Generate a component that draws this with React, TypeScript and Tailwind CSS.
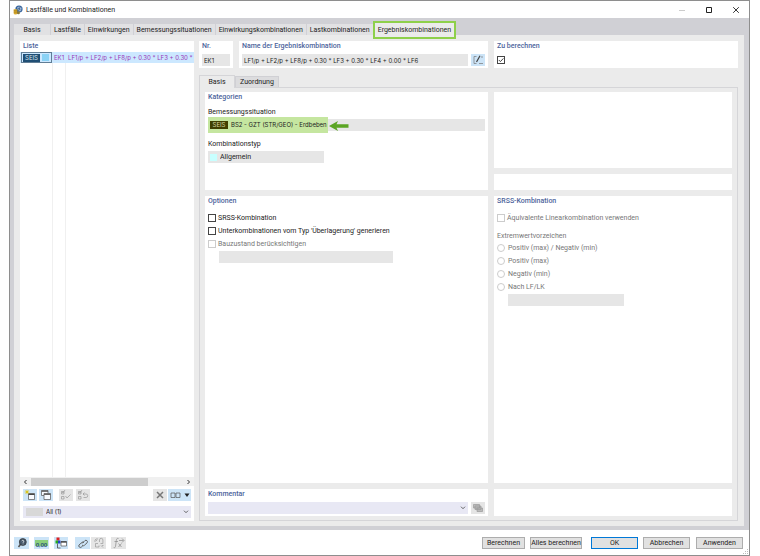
import React, { ReactNode } from "react";

const tabs = [
  "Lastfälle",
  "Einwirkungen",
  "Bemessungssituationen",
  "Einwirkungskombinationen",
  "Lastkombinationen",
];

const valueText = "font-['Inter','Noto_Sans',sans-serif] text-[6px] ";

function Panel({ title, className = "", children }: { title?: string; className?: string; children?: ReactNode }) {
  return (
    <section className={"bg-white px-[3px] " + className}>
      {title && <h2 className="h-[11px] leading-[11px] font-medium text-[#4d649b]">{title}</h2>}
      {children}
    </section>
  );
}

function Check({ id, label, checked = false, disabled = false }: { id: string; label: string; checked?: boolean; disabled?: boolean }) {
  return (
    <div className="flex h-[13px] items-center gap-[2px]">
      <span className="relative flex size-2">
        <input
          id={id}
          type="checkbox"
          defaultChecked={checked}
          disabled={disabled}
          aria-label={label || "Zu berechnen"}
          className="size-2 appearance-none border border-[#444] bg-white disabled:border-[#ccc]"
        />
        {checked && (
          <svg viewBox="0 0 8 8" className="pointer-events-none absolute inset-0 size-2" fill="none" stroke="#444">
            <path d="M1.8 4l1.6 1.6L6.4 2.4" />
          </svg>
        )}
      </span>
      {label && (
        <label htmlFor={id} className={disabled ? "text-[#777]" : ""}>
          {label}
        </label>
      )}
    </div>
  );
}

function Radio({ id, label }: { id: string; label: string }) {
  return (
    <div className="flex h-[13px] items-center gap-[3px]">
      <input id={id} type="radio" name="sign" disabled className="size-2 appearance-none rounded-full border border-[#ccc] bg-white" />
      <label htmlFor={id}>{label}</label>
    </div>
  );
}

function IconButton({ label, muted = false, className = "w-[15px]", children }: { label: string; muted?: boolean; className?: string; children: ReactNode }) {
  return (
    <button
      type="button"
      aria-label={label}
      className={"flex h-3 shrink-0 items-center justify-center " + (muted ? "bg-[#e5e5e5] " : "bg-[#cce4f7] ") + className}
    >
      {children}
    </button>
  );
}

function Icon({ children, wide = false }: { children: ReactNode; wide?: boolean }) {
  return (
    <svg viewBox={wide ? "0 0 20 12" : "0 0 12 12"} className={wide ? "h-3 w-5" : "size-3"} fill="none" stroke="#555" strokeWidth="0.7">
      {children}
    </svg>
  );
}

function Chevron() {
  return (
    <svg viewBox="0 0 6 4" className="pointer-events-none absolute top-1 right-[2px] h-1 w-[6px]" fill="none" stroke="#555" strokeWidth="0.9">
      <path d="M1 0.7l2 2 2-2" />
    </svg>
  );
}

function TitleBar() {
  return (
    <header className="flex h-[17px] shrink-0 items-center bg-white pl-[3px]">
      <svg viewBox="0 0 10 10" className="size-[10px]">
        <circle cx="6" cy="4" r="3.6" fill="#35629b" />
        <path d="M4 2.5l2-1 2.6 1.3L8 6 5.5 6.5z" fill="#9fb9d8" />
        <path d="M5 3l2.500 1.800M7 2L5.500 6" stroke="#23456f" strokeWidth="0.6" />
        <path d="M0.700 4.200h3.600v4.300a1.800 0.900 0 0 1-3.600 0z" fill="#d6a82e" />
        <path d="M4 6.500h2.800v2a1.400 0.800 0 0 1-2.800 0z" fill="#8a7a3c" />
        <path d="M0.700 5.700h3.600M0.700 7.200h3.600" stroke="#8b6710" strokeWidth="0.4" />
      </svg>
      <h1 className="ml-[3px] flex-1 leading-[10px]">Lastfälle und Kombinationen</h1>
      <div className="flex items-center">
        <button type="button" aria-label="Minimieren" className="flex w-[27px] justify-center">
          <svg viewBox="0 0 8 8" className="size-2" stroke="#ccc"><path d="M1 4.500h6" /></svg>
        </button>
        <button type="button" aria-label="Maximieren" className="flex w-[27px] justify-center">
          <svg viewBox="0 0 8 8" className="size-2" fill="none" stroke="#222"><path d="M1.500 1.500h5v5h-5z" /></svg>
        </button>
        <button type="button" aria-label="Schließen" className="flex w-[27px] justify-center">
          <svg viewBox="0 0 8 8" className="size-2" stroke="#222" strokeWidth="0.9"><path d="M1.200 1.200l5.600 5.600M6.800 1.200l-5.600 5.600" /></svg>
        </button>
      </div>
    </header>
  );
}

function ListPanel() {
  return (
    <section className="flex w-[174px] shrink-0 flex-col bg-white">
      <h2 className="h-[11px] pl-[3px] leading-[11px] font-medium text-[#4d649b]">Liste</h2>
      <div className="flex min-h-0 flex-1 flex-col">
        <div className={valueText + "flex h-[11px] items-center bg-[#cce8ff] pl-px text-[#9a35b5]"}>
          <div className="flex h-[11px] w-[31px] shrink-0 items-center gap-[2px] border border-[#607d95] pl-px">
            <span className="h-2 w-[17px] bg-[#1f4e74] text-center leading-[8px] text-[#d7e6f2]">SEIS</span>
            <span className="size-[7px] bg-[#8ad2f5]" />
          </div>
          <span className="w-4 shrink-0 pl-[2px]">EK1</span>
          <span className="whitespace-nowrap">LF1/p + LF2/p + LF8/p + 0.30 * LF3 + 0.30 *</span>
        </div>
        <div className="flex flex-1">
          <div className="w-[33px] border-r border-[#f0f0f0]" />
          <div className="w-[13px] border-r border-[#f0f0f0]" />
        </div>
      </div>
      <div className="flex h-[9px] items-center bg-[#f0f0f0] px-[3px]">
        <svg viewBox="0 0 5 6" className="h-[6px] w-[5px]" fill="none" stroke="#333"><path d="M3.500 1l-2 2 2 2" /></svg>
        <div className="ml-[3px] h-2 w-[117px] bg-[#cdcdcd]" />
        <svg viewBox="0 0 5 6" className="ml-auto h-[6px] w-[5px]" fill="none" stroke="#333"><path d="M1.500 1l2 2-2 2" /></svg>
      </div>
      <div className="mt-[3px] flex px-[3px]">
        <IconButton label="Neu" className="w-[14px]">
          <Icon>
            <path d="M4.500 4.500h6v6h-6z" fill="#f8fbff" />
            <path d="M4.500 5.300h6" stroke="#333" strokeWidth="1.200" />
            <path d="M3 0.800v4.400M0.800 3h4.400M1.500 1.500l3 3M4.500 1.500l-3 3" stroke="#dcc000" />
          </Icon>
        </IconButton>
        <IconButton label="Kopieren" className="ml-[2px] w-[14px]">
          <Icon>
            <path d="M1.500 1.500H8V6.500H1.500z" fill="#f8fbff" />
            <path d="M1.500 2.200H8" strokeWidth="1.200" />
            <path d="M4 4.500h6.500v6H4z" fill="#f8fbff" />
            <path d="M4 5.300h6.500" strokeWidth="1.200" />
          </Icon>
        </IconButton>
        <IconButton label="Alle auswählen" muted className="ml-[6px] w-[14px]">
          <Icon><path stroke="#999" d="M1.500 2.500h2.500v2.500H1.500zM1.500 7.500h2.500v2.500H1.500zM2 2.800l1 1.200 2-3M5.500 7l1.500 2 3.500-3.500" /></Icon>
        </IconButton>
        <IconButton label="Auswahl umkehren" muted className="ml-[3px] w-[14px]">
          <Icon><path stroke="#999" d="M1.500 2.500h2.500v2.500H1.500zM1.500 7.500h2.500v2.500H1.500zM2 2.800l1 1.200 2-3M6 5h3a1.700 1.700 0 0 1 0 3.500H6.500M7.500 3.500L6 5 7.500 6.500" /></Icon>
        </IconButton>
        <IconButton label="Löschen" muted className="ml-auto w-[14px]">
          <Icon><path stroke="#777" strokeWidth="1.500" d="M3 3l6 6M9 3L3 9" /></Icon>
        </IconButton>
        <IconButton label="Ansicht" className="ml-px w-[23px]">
          <Icon wide><path d="M1 4h4v4.500H1zM6 4h4v4.500H6z" stroke="#555" /><path d="M14.500 4.500h5L17 8z" fill="#222" stroke="none" /></Icon>
        </IconButton>
      </div>
      <div className="relative mx-[3px] mt-[5px] mb-[3px] flex h-3 items-center bg-[#e8e8f4] pl-[3px]">
        <span className="h-2 w-[17px] bg-[#d8d8d8]" />
        <select aria-label="Filter" defaultValue="all" className={valueText + "ml-[3px] flex-1 appearance-none bg-transparent outline-none"}>
          <option value="all">All (1)</option>
        </select>
        <Chevron />
      </div>
    </section>
  );
}

function HeaderRow() {
  return (
    <div className="flex h-[27px] gap-[6px]">
      <Panel title="Nr." className="w-[34px] shrink-0">
        <input aria-label="Nr." readOnly value="EK1" className={valueText + "mt-[2px] block h-3 w-full bg-[#e6e6e6] px-[2px]"} />
      </Panel>
      <Panel title="Name der Ergebniskombination" className="w-[249px] shrink-0">
        <div className="mt-[2px] flex gap-[3px]">
          <input
            aria-label="Name der Ergebniskombination"
            readOnly
            value="LF1/p + LF2/p + LF8/p + 0.30 * LF3 + 0.30 * LF4 + 0.00 * LF6"
            className={valueText + "h-3 min-w-0 flex-1 bg-[#e6e6e6] px-[2px]"}
          />
          <IconButton label="Name bearbeiten" className="w-[14px]">
            <Icon>
              <path d="M4.500 2.500H2v7h2.500M7 9.500h4M9 3h2" stroke="#777" />
              <path d="M4.500 8L8 1.800" stroke="#444" strokeWidth="1.200" />
            </Icon>
          </IconButton>
        </div>
      </Panel>
      <Panel title="Zu berechnen" className="flex-1">
        <div className="mt-px">
          <Check id="calc" label="" checked />
        </div>
      </Panel>
    </div>
  );
}

function BasisPage() {
  return (
    <div className="flex flex-1 gap-[6px] border border-[#d5d5d8] px-[5px] pt-1 pb-1">
      <div className="flex w-[283px] shrink-0 flex-col gap-[6px]">
        <Panel title="Kategorien" className="h-[98px]">
          <div className="mt-1 leading-[11px]">Bemessungssituation</div>
          <div className="relative mt-px h-3 bg-[#e6e6e6]">
            <div className={valueText + "absolute -top-[2px] left-0 flex h-4 w-[120px] items-center bg-[#c5e6a0] pl-[2px]"}>
              <span className="h-2 w-[18px] bg-[#404000] text-center leading-2 text-[#d4d4a0]">SEIS</span>
              <input
                aria-label="Bemessungssituation"
                readOnly
                value="BS2 - GZT (STR/GEO) - Erdbeben"
                className="ml-[3px] min-w-0 flex-1 bg-transparent"
              />
            </div>
            <svg viewBox="0 0 20 10" className="absolute top-[2px] left-[121px] h-[10px] w-5">
              <path d="M0 5L9 0 7.500 3.200H19.500V6.800H7.500L9 10z" fill="#5ba524" />
            </svg>
          </div>
          <div className="mt-[8px] leading-[11px]">Kombinationstyp</div>
          <div className="mt-px flex h-3 w-[116px] items-center bg-[#e6e6e6] pl-[2px]">
            <span className="size-[7px] bg-[#c8ffff]" />
            <input aria-label="Kombinationstyp" readOnly value="Allgemein" className="ml-[3px] min-w-0 flex-1 bg-transparent" />
          </div>
        </Panel>
        <Panel title="Optionen" className="flex-1">
          <div className="mt-1">
            <Check id="srss" label="SRSS-Kombination" />
            <Check id="sub" label="Unterkombinationen vom Typ 'Überlagerung' generieren" />
            <Check id="stage" label="Bauzustand berücksichtigen" disabled />
            <input aria-label="Bauzustand" disabled className="mt-px ml-[11px] block h-3 w-[174px] bg-[#e6e6e6]" />
          </div>
        </Panel>
        <Panel title="Kommentar" className="h-[27px]">
          <div className="mt-[2px] flex gap-[3px]">
            <div className="relative flex flex-1">
              <select aria-label="Kommentar" className="h-3 w-full appearance-none bg-[#e8e8f4]">
                <option value=""></option>
              </select>
              <Chevron />
            </div>
            <IconButton label="Kommentare" muted className="w-[14px]">
              <Icon><path d="M1.500 2.500h6v3.500h-6zM3 4h6v3.500H3zM5 6h5.500v3.500H5z" fill="#bbb" stroke="#999" /></Icon>
            </IconButton>
          </div>
        </Panel>
      </div>
      <div className="flex flex-1 flex-col gap-[6px]">
        <Panel className="h-[76px]" />
        <Panel className="h-4" />
        <Panel title="SRSS-Kombination" className="flex-1 text-[#777]">
          <div className="mt-1">
            <Check id="linear" label="Äquivalente Linearkombination verwenden" disabled />
          </div>
          <div className="mt-[7px] leading-[10px]">Extremwertvorzeichen</div>
          <Radio id="posneg" label="Positiv (max) / Negativ (min)" />
          <Radio id="pos" label="Positiv (max)" />
          <Radio id="neg" label="Negativ (min)" />
          <Radio id="lflk" label="Nach LF/LK" />
          <input aria-label="LF/LK" disabled className="mt-px ml-[11px] block h-3 w-[116px] bg-[#e6e6e6]" />
        </Panel>
        <Panel className="h-[27px]" />
      </div>
    </div>
  );
}

function Footer() {
  const button = "h-3 border bg-[#e1e1e1] text-center leading-[10px] whitespace-nowrap ";
  return (
    <footer className="relative flex h-[25px] shrink-0 items-center bg-white pr-[6px] pl-1">
      <IconButton label="Hilfe">
        <Icon>
          <path d="M4.800 7L2.500 10" strokeWidth="1.600" />
          <circle cx="6.800" cy="5" r="3.500" fill="#46586a" stroke="#333" />
          <path d="M5.800 4.200a1 1 0 1 1 1.300 1.100v0.700M7.100 6.600v0.700" stroke="#fff" />
        </Icon>
      </IconButton>
      <IconButton label="Einheiten" className="ml-[5px] w-[15px]">
        <span className="h-[6px] w-[13px] bg-[#8ccf7c] text-center text-[6px] leading-[9px] font-medium text-[#234a78]">0,00</span>
      </IconButton>
      <IconButton label="Darstellung" className="ml-[5px] w-[14px]">
        <Icon>
          <path d="M1.500 0.500h3v3h-3z" fill="#d22" stroke="none" />
          <path d="M0.500 3.500H3v3H0.500z" fill="#2a2" stroke="none" />
          <path d="M3 3.500h2.500v3H3z" fill="#24c" stroke="none" />
          <path d="M2.500 6.500v4.500h3" stroke="#333" />
          <path d="M6 4.500h5.500v4.500H6z" fill="#fff" />
          <path d="M6 5h5.500" stroke="#333" strokeWidth="1.200" />
        </Icon>
      </IconButton>
      <IconButton label="Verknüpfen" className="ml-[7px] w-[15px]">
        <Icon>
          <path strokeWidth="0.900" d="M5 6.500l3-3a1.600 1.600 0 0 1 2.200 2.200L7.500 8.200a1.600 1.600 0 0 1-2.200 0M7 5.500a1.600 1.600 0 0 0-2.200 0L2 8a1.600 1.600 0 0 0 2.200 2.200L6 8.500" />
        </Icon>
      </IconButton>
      <IconButton label="Trennen" muted className="ml-px w-[15px]">
        <Icon>
          <path stroke="#999" d="M6.500 5V3a1.700 1.700 0 0 1 3.400 0v3.500H7.500M5 6.500H2.500V10H6V8.500M2 2l2 2M4 1v2M1 4h2M8 8.500l2 2M10.500 8.500H9" />
        </Icon>
      </IconButton>
      <IconButton label="Formel" muted className="ml-[5px] w-[15px]">
        <Icon>
          <path stroke="#888" d="M5.500 1.500c-1.500-0.500-2 0.500-2.200 2L2.500 9.500c-0.200 1-0.800 1.500-1.800 1M1.500 4.500H5M5.500 6.500L8.500 10M8.500 6.500L5.500 10M6 3.500h4.500M9 1.500l2 2-2 2" />
        </Icon>
      </IconButton>
      <div className="ml-auto flex">
        <button type="button" className={button + "w-[43px] border-[#adadad]"}>Berechnen</button>
        <button type="button" className={button + "ml-[5px] w-[52px] border-[#adadad]"}>Alles berechnen</button>
        <button type="button" className={button + "ml-[9px] w-[47px] border-[#0078d7]"}>OK</button>
        <button type="button" className={button + "ml-[5px] w-[47px] border-[#adadad]"}>Abbrechen</button>
        <button type="button" className={button + "ml-[6px] w-[47px] border-[#adadad]"}>Anwenden</button>
      </div>
      <svg viewBox="0 0 6 6" className="absolute right-0 bottom-0 size-[6px]" fill="#bbb">
        <path d="M4 0h1v1H4zM4 2h1v1H4zM2 2h1v1H2zM4 4h1v1H4zM2 4h1v1H2zM0 4h1v1H0z" />
      </svg>
    </footer>
  );
}

export default function App() {
  return (
    <div className="flex h-screen bg-white pr-[10px] pl-[9px] font-['Roboto','Noto_Sans',sans-serif] text-[7px] leading-[8px] text-[#222]">
      <main className="flex flex-1 flex-col border border-[#8e8e8e]">
        <TitleBar />
        <div className="flex flex-1 flex-col bg-[#d0d0d5] px-1 pr-[5px] pb-1">
          <nav className="flex h-[17px] items-end pt-[3px]">
            <button type="button" className="h-[11px] w-9 bg-[#e1e1e3]">Basis</button>
            {tabs.map((t) => (
              <button key={t} type="button" className="ml-px h-[11px] bg-[#e1e1e3] px-[3px] whitespace-nowrap">{t}</button>
            ))}
            <button type="button" className="z-10 -mb-1 h-[18px] border-2 border-[#8ed04b] bg-[#ebebeb] px-[3px] whitespace-nowrap">
              Ergebniskombinationen
            </button>
          </nav>
          <div className="flex flex-1 gap-[5px] bg-[#ebebeb] px-[6px] pt-[6px] pb-[5px]">
            <ListPanel />
            <div className="flex flex-1 flex-col">
              <HeaderRow />
              <div className="mt-[7px] flex h-3 items-end">
                <button type="button" className="z-10 -mb-px h-[13px] w-[36px] border border-b-0 border-[#d5d5d8] bg-[#ebebeb]">Basis</button>
                <button type="button" className="h-[11px] w-11 border border-b-0 border-[#d0d0d4] bg-[#dcdcde]">Zuordnung</button>
              </div>
              <BasisPage />
            </div>
          </div>
        </div>
        <Footer />
      </main>
    </div>
  );
}
